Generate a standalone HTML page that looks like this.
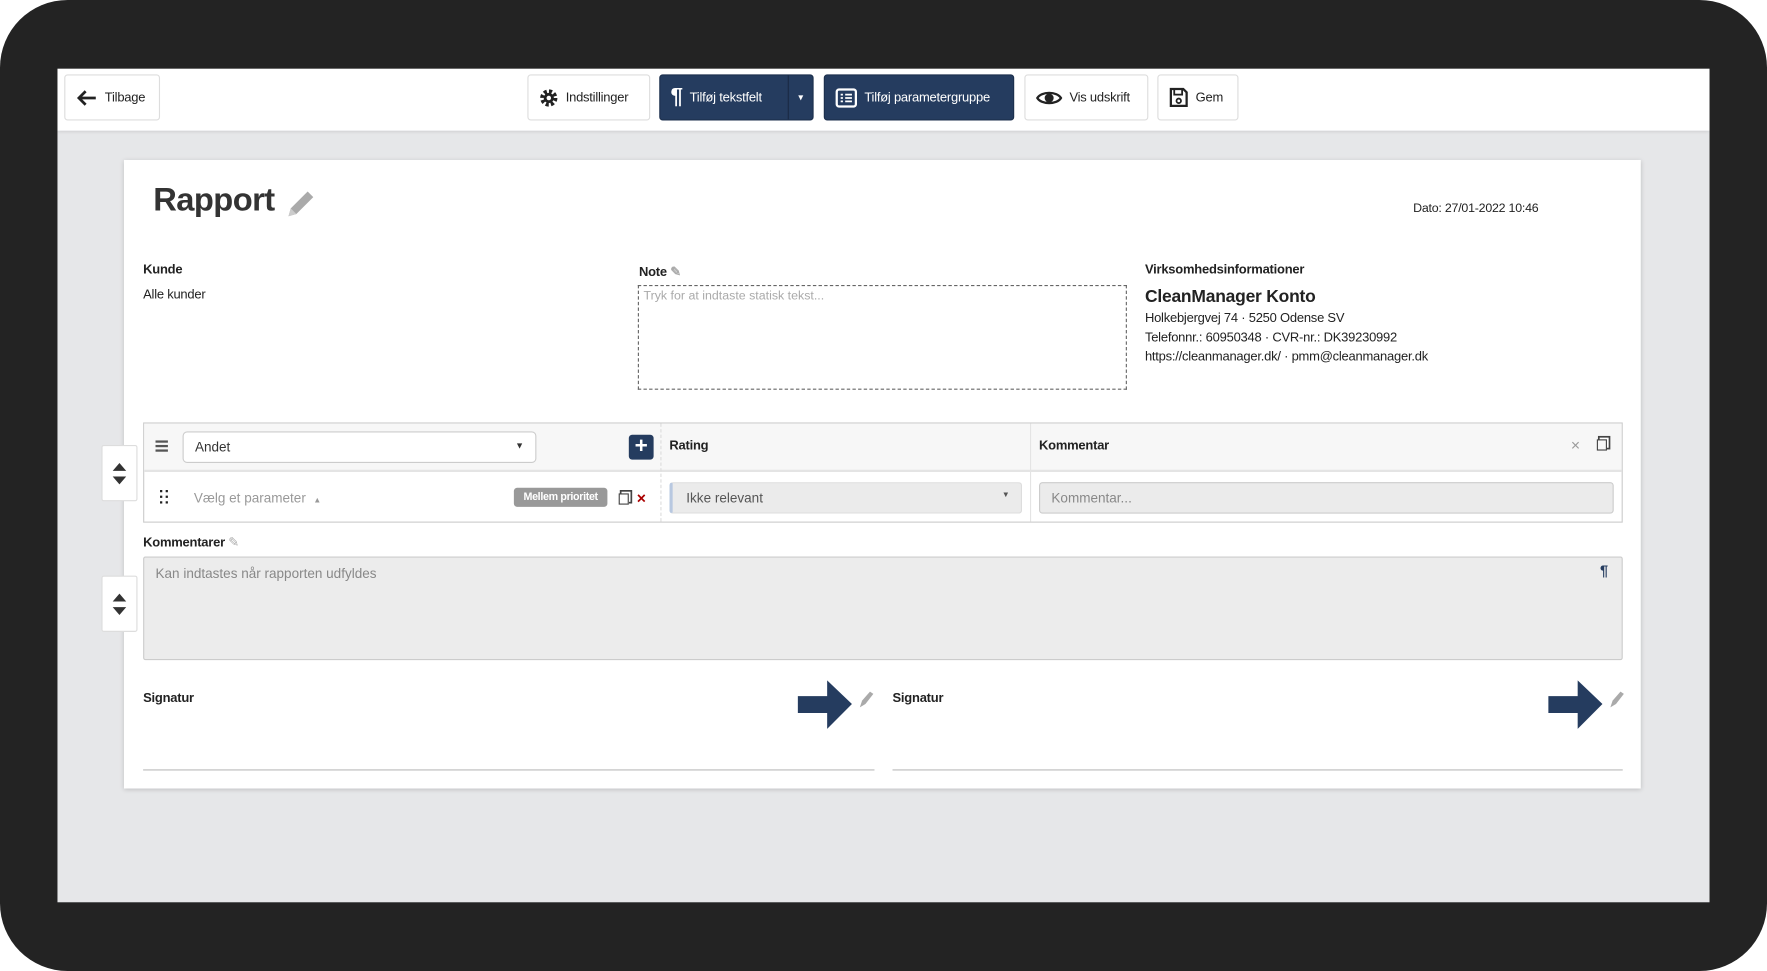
<!DOCTYPE html>
<html><head><meta charset="utf-8"><style>
*{box-sizing:border-box;margin:0;padding:0}
html,body{width:1767px;height:971px;overflow:hidden;background:#fff;font-family:"Liberation Sans",Arial,sans-serif;color:#333}
#w{position:absolute;left:0;top:0;width:1568px;height:862px;transform-origin:0 0;transform:scale(1.12691,1.12645)}
.frame{position:absolute;left:0;top:0;width:1568px;height:862px;background:#232323;border-radius:60px}
.scr{position:absolute;left:51px;top:61px;width:1466px;height:740px;background:#e6e7e9;overflow:hidden}
.hdr{position:absolute;left:0;top:0;width:1466px;height:55px;background:#fff;box-shadow:0 1px 3px rgba(0,0,0,.12)}
.btn{position:absolute;top:5px;height:41px;border:1px solid #ddd;border-radius:3px;background:#fff;font-size:11.5px;display:flex;align-items:center;padding:0 9px;gap:6px;color:#222;white-space:nowrap;letter-spacing:-0.2px}
.btn.d{background:#253c5f;border-color:#1c2f4c;color:#fff}
.abs{position:absolute;white-space:nowrap}
.card{position:absolute;left:59px;top:81px;width:1346px;height:558px;background:#fff;box-shadow:0 1px 4px rgba(0,0,0,.18)}
.lbl{font-size:11.5px;font-weight:bold;color:#222;position:absolute;white-space:nowrap;letter-spacing:-0.2px}
.t{font-size:11.5px;color:#222;position:absolute;white-space:nowrap;letter-spacing:-0.2px}
.side{position:absolute;width:32px;height:50px;background:#fff;border:1px solid #ddd;border-radius:2px;left:-20px}
.dots{position:absolute;width:2px;height:2px;background:#222;box-shadow:0 5px #222,0 10px #222,5px 0 #222,5px 5px #222,5px 10px #222}
</style></head><body><div id="w">
<div class="frame"></div>
<div class="scr">
 <div class="hdr">
  <div class="btn" style="left:6px;width:85px"><svg width="20" height="16" viewBox="0 0 20 16"><path d="M18 8H3M9 2L3 8l6 6" stroke="#222" stroke-width="2.4" fill="none"/></svg>Tilbage</div>
  <div class="btn" style="left:417px;width:109px"><svg width="18" height="18" viewBox="0 0 20 20"><circle cx="10" cy="10" r="6.5" fill="none" stroke="#222" stroke-width="4" stroke-dasharray="3 2.1"/><circle cx="10" cy="10" r="5" fill="#222"/><circle cx="10" cy="10" r="2.2" fill="#fff"/></svg>Indstillinger</div>
  <div class="btn d" style="left:534px;width:137px;padding-right:0"><span style="font-size:20px;font-weight:bold">¶</span>Tilføj tekstfelt<span style="position:absolute;right:0;top:0;width:22px;height:39px;border-left:1px solid #1a2a44;font-size:9px;display:flex;align-items:center;justify-content:center">▾</span></div>
  <div class="btn d" style="left:680px;width:169px"><svg width="20" height="18" viewBox="0 0 20 18"><rect x="1.5" y="1.5" width="17" height="15" rx="2" fill="none" stroke="#fff" stroke-width="2"/><path d="M5 6h2M9 6h6M5 9h2M9 9h6M5 12h2M9 12h6" stroke="#fff" stroke-width="1.5"/></svg>Tilføj parametergruppe</div>
  <div class="btn" style="left:858px;width:110px"><svg width="24" height="16" viewBox="0 0 24 16"><path d="M1.5 8C5 2 19 2 22.5 8 19 14 5 14 1.5 8Z" fill="none" stroke="#222" stroke-width="2"/><circle cx="12" cy="8" r="4" fill="#222"/></svg>Vis udskrift</div>
  <div class="btn" style="left:976px;width:72px"><svg width="18" height="19" viewBox="0 0 18 19"><path d="M2 2h11l3 3v12H2Z" fill="none" stroke="#222" stroke-width="2"/><rect x="5" y="2" width="7" height="5" fill="none" stroke="#222" stroke-width="1.6"/><circle cx="9" cy="12.5" r="2" fill="none" stroke="#222" stroke-width="1.6"/></svg>Gem</div>
 </div>
 <div class="card">
  <div class="abs" style="left:26px;top:20px;font-size:29px;font-weight:bold;color:#333;letter-spacing:-0.5px">Rapport</div>
  <svg class="abs" style="left:142px;top:24px" width="30" height="30" viewBox="0 0 30 30"><path d="M4 26l2-7L21 4l5 5-15 15z" fill="#aaa"/><path d="M4 26l2-7 5 5z" fill="#ccc"/></svg>
  <div class="t" style="left:1144px;top:37px;font-size:11px">Dato: 27/01-2022 10:46</div>
  <div class="lbl" style="left:17px;top:92px">Kunde</div>
  <div class="t" style="left:17px;top:114px">Alle kunder</div>
  <div class="lbl" style="left:457px;top:92px">Note <span style="color:#aaa">✎</span></div>
  <div class="abs" style="left:456px;top:111px;width:434px;height:93px;border:1px dashed #666;font-size:11px;color:#aaa;padding:3px 4px">Tryk for at indtaste statisk tekst...</div>
  <div class="lbl" style="left:906px;top:92px">Virksomhedsinformationer</div>
  <div class="t" style="left:906px;top:113px;font-size:15.5px;font-weight:bold">CleanManager Konto</div>
  <div class="t" style="left:906px;top:133px;line-height:17px">Holkebjergvej 74 · 5250 Odense SV<br>Telefonnr.: 60950348 · CVR-nr.: DK39230992<br>https://cleanmanager.dk/ · pmm@cleanmanager.dk</div>
  <div class="abs" style="left:17px;top:233px;width:1313px;height:89px;border:1px solid #ccc;background:#fff">
   <div class="abs" style="left:0;top:0;width:1311px;height:43px;background:#f7f7f7;border-bottom:2px solid #e4e4e4"></div>
   <div class="abs" style="left:458px;top:0;height:87px;border-left:1px dashed #ddd"></div>
   <div class="abs" style="left:786px;top:0;height:87px;border-left:1px solid #e4e4e4"></div>
   <div class="abs" style="left:10px;top:15px;width:11px;height:10px;border-top:2px solid #555;border-bottom:2px solid #555"><div style="margin-top:2px;border-top:2px solid #555"></div></div>
   <div class="abs" style="left:34px;top:7px;width:314px;height:28px;border:1px solid #ccc;border-radius:4px;background:#fff;font-size:12px;padding:6px 10px">Andet<span style="position:absolute;right:10px;top:7px;font-size:8px">▼</span></div>
   <div class="abs" style="left:430px;top:10px;width:22px;height:22px;background:#253c5f;border-radius:3px;color:#fff;font-size:20px;line-height:21px;text-align:center;font-weight:bold">+</div>
   <div class="lbl" style="left:466px;top:14px">Rating</div>
   <div class="lbl" style="left:794px;top:14px">Kommentar</div>
   <div class="abs" style="left:1266px;top:11px;color:#999;font-size:14px">×</div>
   <div class="abs" style="left:1289px;top:14px;width:9px;height:10px;border:1.5px solid #444;box-shadow:2px -2px 0 -0.5px #fff,2px -2px 0 1px #444"></div>
   <div class="dots" style="left:14px;top:59px"></div>
   <div class="abs" style="left:44px;top:59px;font-size:12px;color:#999">Vælg et parameter &nbsp;<span style="font-size:7px">▲</span></div>
   <div class="abs" style="left:328px;top:57px;width:83px;height:17px;background:#999;border-radius:3px;color:#fff;font-size:9.5px;font-weight:bold;text-align:center;line-height:17px;letter-spacing:-0.3px">Mellem prioritet</div>
   <div class="abs" style="left:421px;top:62px;width:9px;height:10px;border:1.5px solid #444;box-shadow:2px -2px 0 -0.5px #fff,2px -2px 0 1px #444"></div>
   <div class="abs" style="left:437px;top:58px;color:#a00;font-size:14px;font-weight:bold">×</div>
   <div class="abs" style="left:466px;top:52px;width:313px;height:28px;background:#ebebeb;border:1px solid #ddd;border-left:3px solid #b8c8e0;border-radius:3px;font-size:12px;color:#555;padding:6px 12px">Ikke relevant<span style="position:absolute;right:10px;top:7px;font-size:7px">▼</span></div>
   <div class="abs" style="left:794px;top:52px;width:510px;height:28px;background:#ebebeb;border:1px solid #ccc;border-radius:3px;font-size:12px;color:#888;padding:6px 10px">Kommentar...</div>
  </div>
  <div class="side" style="top:253px"><svg width="30" height="48" viewBox="0 0 30 48"><path d="M9 22l6-7 6 7zM9 27l6 7 6-7z" fill="#333"/></svg></div>
  <div class="side" style="top:369px"><svg width="30" height="48" viewBox="0 0 30 48"><path d="M9 22l6-7 6 7zM9 27l6 7 6-7z" fill="#333"/></svg></div>
  <div class="lbl" style="left:17px;top:332px">Kommentarer <span style="color:#aaa;font-weight:normal">✎</span></div>
  <div class="abs" style="left:17px;top:352px;width:1313px;height:92px;background:#ececec;border:1px solid #ccc;border-radius:2px;font-size:12px;color:#888;padding:7px 10px">Kan indtastes når rapporten udfyldes<span style="position:absolute;right:12px;top:4px;color:#253c5f;font-weight:bold;font-size:13px">¶</span></div>
  <div class="lbl" style="left:17px;top:472px">Signatur</div>
  <div class="lbl" style="left:682px;top:472px">Signatur</div>
  <svg class="abs" style="left:597px;top:461px" width="72" height="45" viewBox="0 0 72 45"><path d="M1 15h26V1l22 21-22 22V30H1z" fill="#253c5f"/><path d="M56 25l2-6 7-8 3 2-7 9z" fill="#aaa"/></svg>
  <svg class="abs" style="left:1263px;top:461px" width="72" height="45" viewBox="0 0 72 45"><path d="M1 15h26V1l22 21-22 22V30H1z" fill="#253c5f"/><path d="M56 25l2-6 7-8 3 2-7 9z" fill="#aaa"/></svg>
  <div class="abs" style="left:17px;top:541px;width:649px;border-top:1.5px solid #bbb"></div>
  <div class="abs" style="left:682px;top:541px;width:648px;border-top:1.5px solid #bbb"></div>
 </div>
</div>
</div></body></html>
